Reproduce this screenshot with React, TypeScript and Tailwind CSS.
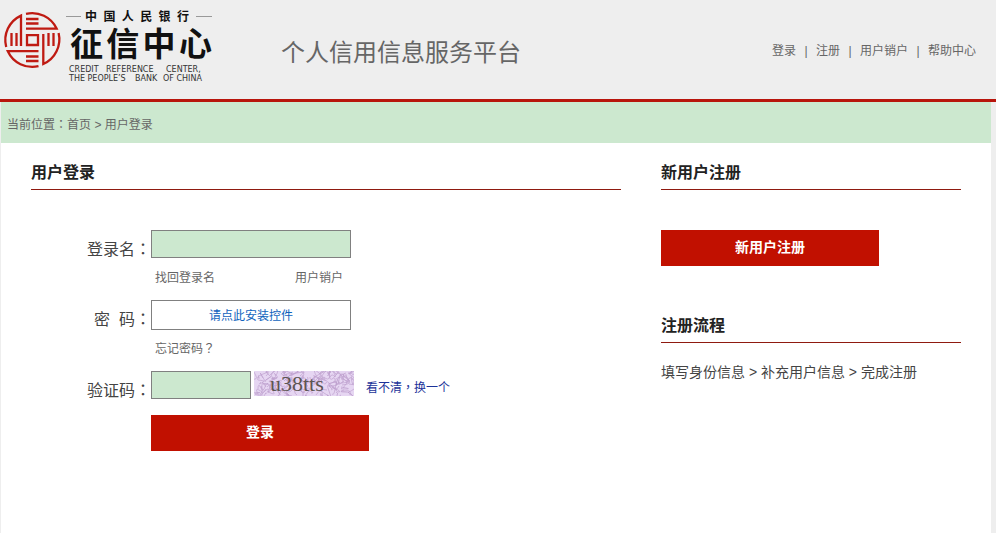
import React from "react";

const navItems = ["登录", "注册", "用户销户", "帮助中心"];

const serif = '"Liberation Serif", serif';
const cjk = '"Liberation Sans", "Noto Sans CJK SC", sans-serif';
const wide = '"DejaVu Sans", sans-serif';

// Full-width punctuation centred in its em box.
function Mark({ children }: { children: string }) {
  return <span className="font-['Noto_Sans_CJK_TC',sans-serif] leading-none">{children}</span>;
}

function Logo() {
  return (
    <svg width="216" height="88" viewBox="0 0 216 88" role="img" aria-label="中国人民银行征信中心">
      <g fill="none" stroke="#bf1a12" strokeWidth="2.300">
        <path d="M26 13.8A27 27 0 0 1 56.6 28.6H26" />
        <path d="M26 19H38.500M26 23.500H38.500" />
        <path d="M58.600 33A27 27 0 0 1 43.300 64V34" />
        <path d="M48.500 33V46M53.500 33V46" />
        <path d="M38.500 66.200A27 27 0 0 1 7.800 51.200H38.500" />
        <path d="M26 56.500H38.500M26 61H38.500" />
        <path d="M6.200 47A27 27 0 0 1 21 15.600V46" />
        <path d="M11.500 33V46M16.500 33V46" />
        <path d="M27 35.200H38V45H27Z" />
      </g>
      <path d="M66 16.500H81M196 16.500H212" stroke="#999" strokeWidth="1" />
      <g fill="#111" fontFamily={cjk}>
        <g fontSize="12" fontWeight="700">
          {["中", "国", "人", "民", "银", "行"].map((c, i) => (
            <text key={c} x={85 + i * 18.400} y="21">{c}</text>
          ))}
        </g>
        <g fontSize="33" fontWeight="700">
          {["征", "信", "中", "心"].map((c, i) => (
            <text key={c} x={70 + i * 36.300} y="56">{c}</text>
          ))}
        </g>
        <g fontSize="8" fill="#333" fontFamily={wide}>
          <text x="69" y="72">CREDIT</text>
          <text x="106" y="72">REFERENCE</text>
          <text x="166" y="72">CENTER,</text>
          <text x="69" y="81">THE PEOPLE’S</text>
          <text x="135" y="81">BANK</text>
          <text x="163" y="81">OF CHINA</text>
        </g>
      </g>
    </svg>
  );
}

function squiggles(count: number) {
  let seed = 38;
  const next = () => {
    seed = (seed * 1103515245 + 12345) % 2147483648;
    return seed / 2147483648;
  };
  const step = () => Math.round(next() * 12 - 6);
  return Array.from({ length: count }, () => {
    const x = Math.round(next() * 100);
    const y = Math.round(next() * 25);
    return `M${x} ${y}q${step()} ${step()} ${step()} ${step()}t${step()} ${step()}`;
  }).join("");
}

function Captcha() {
  return (
    <svg width="100" height="25" viewBox="0 0 100 25" role="img" aria-label="验证码图片">
      <rect width="100" height="25" fill="#e6d6f2" />
      <path d={squiggles(120)} fill="none" stroke="#bfa0cf" strokeWidth="0.700" />
      <text x="16" y="20" fontSize="22" fill="#5c5552" fontFamily={serif}>u38tts</text>
    </svg>
  );
}

function Heading({ children }: { children: string }) {
  return (
    <h2 className="border-b border-[#8f1a10] pt-3.5 text-base leading-8 font-bold text-[#222]">
      {children}
    </h2>
  );
}

const label = "pt-2 text-right text-base leading-6 whitespace-pre text-[#444]";
const field = "block h-7 border border-[#808080] bg-[#cce8cf] px-2 text-sm";
const redButton = "block h-9 w-[218px] bg-[#c11000] pb-0.5 text-sm font-bold text-white";

export default function App() {
  return (
    <div className="flex min-h-screen flex-col bg-[#eee] font-['Liberation_Sans','Noto_Sans_CJK_SC',sans-serif] text-xs text-[#666]">
      <header className="flex h-[102px] items-center border-b-[3px] border-[#b8150c]">
        <a href="#" className="w-[281px] shrink-0 self-start">
          <Logo />
        </a>
        <h1 className="pt-1.5 text-2xl">个人信用信息服务平台</h1>
        <nav className="ml-auto flex pt-0.5 pr-5">
          {navItems.map((item, i) => (
            <React.Fragment key={item}>
              {i > 0 && <span className="w-5 text-center">|</span>}
              <a href="#">{item}</a>
            </React.Fragment>
          ))}
        </nav>
      </header>

      <main className="mr-[5px] ml-px flex-1 bg-white">
        <nav className="bg-[#cce8cf] px-1.5 pt-[5px] leading-9">
          当前位置<Mark>：</Mark>
          <a href="#">首页</a> &gt; 用户登录
        </nav>

        <div className="flex gap-10 px-[30px]">
          <section className="flex-1">
            <Heading>用户登录</Heading>
            <form className="grid grid-cols-[120px_1fr] pt-10" onSubmit={(e) => e.preventDefault()}>
              <label htmlFor="login" className={label}>
                登录名<Mark>：</Mark>
              </label>
              <div className="h-[70px] w-[200px]">
                <input id="login" type="text" className={`${field} w-full`} />
                <div className="flex justify-between pt-2.5 pr-2 pl-1 leading-5">
                  <a href="#">找回登录名</a>
                  <a href="#">用户销户</a>
                </div>
              </div>

              <label htmlFor="password" className={label}>
                密{"  "}码<Mark>：</Mark>
              </label>
              <div className="h-[71px] w-[200px]">
                <button id="password" type="button" className="block h-[30px] w-full border border-[#808080] bg-white pt-0.5 text-[#1063bd]">
                  请点此安装控件
                </button>
                <div className="pt-[9px] pl-1 leading-5">
                  <a href="#">忘记密码<Mark>？</Mark></a>
                </div>
              </div>

              <label htmlFor="captcha" className={label}>
                验证码<Mark>：</Mark>
              </label>
              <div className="flex h-11 items-start">
                <input id="captcha" type="text" className={`${field} mr-[3px] w-[100px]`} />
                <Captcha />
                <a href="#" className="ml-3 pt-[7px] leading-5 text-[#1c3399]">
                  看不清<Mark>，</Mark>换一个
                </a>
              </div>

              <button type="submit" className={`${redButton} col-start-2`}>登录</button>
            </form>
          </section>

          <aside className="w-[300px]">
            <Heading>新用户注册</Heading>
            <div className="pt-10 pb-[30px]">
              <button type="button" className={redButton}>新用户注册</button>
            </div>
            <Heading>注册流程</Heading>
            <p className="pt-[17px] text-sm leading-6 text-[#444]">填写身份信息 &gt; 补充用户信息 &gt; 完成注册</p>
          </aside>
        </div>
      </main>
    </div>
  );
}
